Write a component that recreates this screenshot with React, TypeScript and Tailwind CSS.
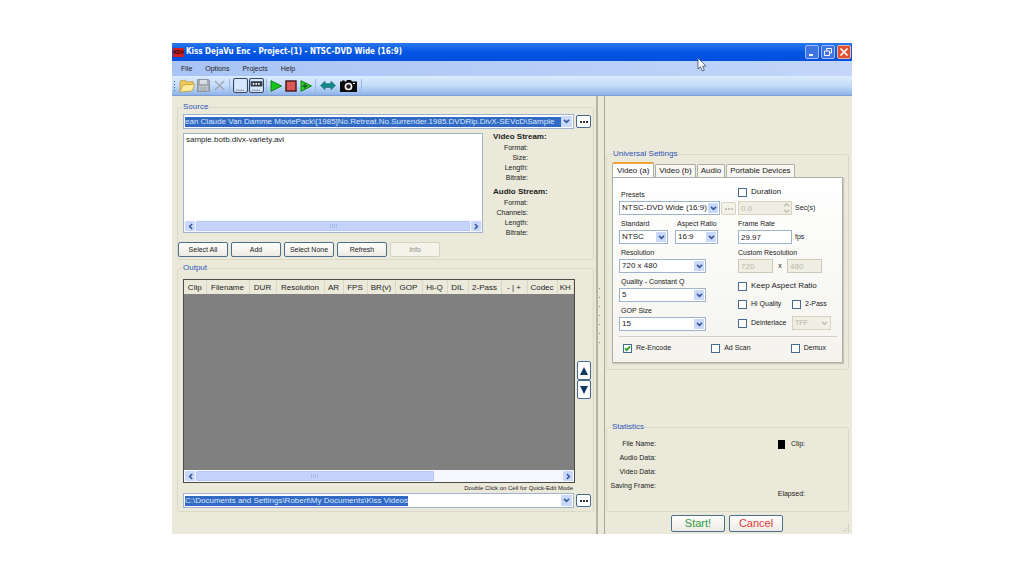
import { useState, type ReactNode } from 'react';
import clsx from 'clsx';

const COLUMNS = [
  { label: 'Clip', width: 'w-[22px]' },
  { label: 'Filename', width: 'w-[43px]' },
  { label: 'DUR', width: 'w-[27px]' },
  { label: 'Resolution', width: 'w-[48px]' },
  { label: 'AR', width: 'w-[19px]' },
  { label: 'FPS', width: 'w-[24px]' },
  { label: 'BR(v)', width: 'w-[28px]' },
  { label: 'GOP', width: 'w-[27px]' },
  { label: 'Hi-Q', width: 'w-[25px]' },
  { label: 'DIL', width: 'w-[21px]' },
  { label: '2-Pass', width: 'w-[33px]' },
  { label: '- | +', width: 'w-[26px]' },
  { label: 'Codec', width: 'w-[30px]' },
  { label: 'KH', width: '' },
];

const STREAMS = [
  { title: 'Video Stream:', fields: ['Format:', 'Size:', 'Length:', 'Bitrate:'] },
  { title: 'Audio Stream:', fields: ['Format:', 'Channels:', 'Length:', 'Bitrate:'] },
];

const TABS = ['Video (a)', 'Video (b)', 'Audio', 'Portable Devices'];

function Chevron({ className = 'text-[#3b5a9a]' }: { className?: string }) {
  return (
    <svg viewBox="0 0 8 6" className={clsx('h-[5px] w-[7px]', className)} fill="none" stroke="currentColor" strokeWidth="2">
      <path d="M1 1l3 3 3-3" />
    </svg>
  );
}

function Group({ title, className, children }: { title: string; className?: string; children: ReactNode }) {
  return (
    <fieldset className={clsx('min-w-0 rounded-[3px] border border-[#dad8c6]', className)}>
      <legend className="h-[10px] px-px text-[8px] leading-[10px] text-[#2f55b8]">{title}</legend>
      {children}
    </fieldset>
  );
}

function PushButton({ label, disabled, className }: { label: string; disabled?: boolean; className?: string }) {
  return (
    <button
      type="button"
      disabled={disabled}
      className={clsx(
        'flex items-center justify-center rounded-[2px] border leading-none',
        disabled
          ? 'border-[#d5d3c2] bg-[#f4f3ea] text-[#8b8a80]'
          : 'border-[#4c6f90] bg-gradient-to-b from-white to-[#eceae2] text-[#222]',
        className
      )}
    >
      {label}
    </button>
  );
}

function Dots({ className }: { className: string }) {
  return (
    <>
      <span className={clsx('h-[2px] w-[2px]', className)} />
      <span className={clsx('h-[2px] w-[2px]', className)} />
      <span className={clsx('h-[2px] w-[2px]', className)} />
    </>
  );
}

function Combo({ label, value, fill }: { label: string; value: string; fill?: boolean }) {
  const [text, setText] = useState(value);
  return (
    <div className="flex h-[15px] items-center gap-[2px]">
      <div className="flex h-full min-w-0 flex-1 items-center border border-[#9fb3cc] bg-white p-px">
        <div className="flex h-full min-w-0 flex-1 items-center">
          <input
            aria-label={label}
            value={text}
            onChange={(e) => setText(e.target.value)}
            className={clsx(
              'h-[10px] bg-[#316ac5] text-[8px] leading-[10px] text-[#dce8fa] outline-none',
              fill ? 'w-full' : 'field-sizing-content'
            )}
          />
        </div>
        <button type="button" aria-label={`${label} list`} className="flex h-full w-[11px] items-center justify-center bg-[#c9d8fb]">
          <Chevron />
        </button>
      </div>
      <button
        type="button"
        aria-label={`Browse ${label}`}
        className="flex h-[13px] w-[15px] items-center justify-center gap-px rounded-[2px] border border-[#45688f] bg-white"
      >
        <Dots className="bg-[#333]" />
      </button>
    </div>
  );
}

function ScrollBar({ thumb }: { thumb: string }) {
  return (
    <div className="flex h-[12px] shrink-0 bg-[#f6f8fe] p-px">
      <button type="button" aria-label="Scroll left" className="flex w-[10px] items-center justify-center rounded-[1px] bg-[#c9d8fb]">
        <Chevron className="rotate-90 text-[#3b5a9a]" />
      </button>
      <div className="flex min-w-0 flex-1 px-px">
        <div className={clsx('flex items-center justify-center gap-px rounded-[1px] border border-[#b4c8f6] bg-[#c5d3fb]', thumb)}>
          {[0, 1, 2, 3].map((n) => (
            <span key={n} className="h-[4px] w-px bg-[#a9bdf0]" />
          ))}
        </div>
      </div>
      <button type="button" aria-label="Scroll right" className="flex w-[10px] items-center justify-center rounded-[1px] bg-[#c9d8fb]">
        <Chevron className="-rotate-90 text-[#3b5a9a]" />
      </button>
    </div>
  );
}

function Dropdown({ label, value, className }: { label: string; value: string; className?: string }) {
  return (
    <label className={clsx('block', className)}>
      <span className="block h-[12px] pl-[2px] leading-[12px] whitespace-nowrap">{label}</span>
      <SelectBox value={value} />
    </label>
  );
}

function SelectBox({ value, label, disabled }: { value: string; label?: string; disabled?: boolean }) {
  return (
    <span className={clsx('relative block h-[14px] border', disabled ? 'border-[#d5d3c2]' : 'border-[#9fb3cc]')}>
      <select
        aria-label={label}
        disabled={disabled}
        className={clsx(
          'block h-full w-full appearance-none pl-[2px] leading-[12px] outline-none',
          disabled ? 'bg-[#efeee2] text-[7px] text-[#b9b7a6] opacity-100' : 'bg-white text-[8px] text-[#222]'
        )}
      >
        <option>{value}</option>
      </select>
      <span
        className={clsx(
          'pointer-events-none absolute top-px right-px bottom-px flex w-[10px] items-center justify-center',
          disabled ? 'bg-[#f2f1e8]' : 'bg-[#c9d8fb]'
        )}
      >
        <Chevron className={disabled ? 'text-[#c5c3b4]' : 'text-[#3b5a9a]'} />
      </span>
    </span>
  );
}

function Check({ label, checked = false, className }: { label: string; checked?: boolean; className?: string }) {
  const [on, setOn] = useState(checked);
  return (
    <label className={clsx('flex h-[12px] items-center gap-[4px] whitespace-nowrap', className)}>
      <span className="relative block h-[9px] w-[9px]">
        <input
          type="checkbox"
          checked={on}
          onChange={(e) => setOn(e.target.checked)}
          className="block h-[9px] w-[9px] appearance-none border border-[#476a8e] bg-white"
        />
        {on && (
          <svg viewBox="0 0 9 9" className="pointer-events-none absolute inset-0" fill="none" stroke="#21a121" strokeWidth="1.7">
            <path d="M2 4.2l1.8 2L7 2.4" />
          </svg>
        )}
      </span>
      {label}
    </label>
  );
}

function TitleBar() {
  return (
    <header className="flex h-[18px] items-center bg-gradient-to-b from-[#2a78ec] via-[#0455e4] to-[#0350dc] pr-px pl-px">
      <span className="flex h-[9px] w-[11px] items-center justify-center bg-[#d3201f] text-[5px] leading-none font-bold text-[#2b0505]">
        KDV
      </span>
      <h1 className="ml-[2px] flex-1 text-[8px] font-bold whitespace-nowrap text-white [font-family:'DejaVu_Sans_Condensed','DejaVu_Sans',sans-serif]">
        Kiss DejaVu Enc - Project-(1) - NTSC-DVD Wide (16:9)
      </h1>
      <div className="flex gap-[2px]">
        <button type="button" aria-label="Minimize" className="h-[14px] w-[14px] rounded-[2px] border border-[#9dbcf5] bg-[#3f74e0]">
          <svg viewBox="0 0 12 12"><path d="M3 8h4v2H3z" fill="#fff" /></svg>
        </button>
        <button type="button" aria-label="Restore" className="h-[14px] w-[14px] rounded-[2px] border border-[#9dbcf5] bg-[#3f74e0]">
          <svg viewBox="0 0 12 12" fill="none" stroke="#fff">
            <path d="M4.5 4.5V2.5h5v4.5H8" />
            <path d="M2.5 5h5v4.5h-5z" />
          </svg>
        </button>
        <button type="button" aria-label="Close" className="h-[14px] w-[14px] rounded-[2px] border border-[#f0b5a5] bg-[#dc5233]">
          <svg viewBox="0 0 12 12" stroke="#fff" strokeWidth="1.7"><path d="M2.5 2.5l7 7M9.5 2.5l-7 7" /></svg>
        </button>
      </div>
    </header>
  );
}

function Tool({ label, className = 'w-[15px]', children }: { label: string; className?: string; children: ReactNode }) {
  return (
    <button type="button" aria-label={label} className={clsx('flex h-[16px] items-center justify-center', className)}>
      {children}
    </button>
  );
}

function ToolBar() {
  return (
    <div className="flex h-[20px] items-center border-b border-[#7f9fd3] bg-gradient-to-b from-[#dcebfe] via-[#c5dcfa] to-[#8fb3ea] pl-[2px]">
      <div className="mr-[3px] flex flex-col gap-[2px]">
        {[0, 1, 2, 3].map((n) => (
          <span key={n} className="h-px w-px bg-[#3a5c9c]" />
        ))}
      </div>
      <Tool label="Open" className="w-[17px]">
        <svg viewBox="0 0 16 14" className="h-[14px] w-[16px]" stroke="#b89433" strokeWidth=".7">
          <path d="M1 13V2l5-1 1 2 7-.5V6L1 13z" fill="#efc95a" />
          <path d="M1 13L4 6l12-1-3 7z" fill="#fdeb9a" />
        </svg>
      </Tool>
      <Tool label="Save" className="w-[16px]">
        <svg viewBox="0 0 13 13" className="h-[13px] w-[13px]">
          <path d="M.5.5h11l1 1v11H.5z" fill="#a3aab2" stroke="#8d959e" />
          <path d="M3 1h7v4H3z" fill="#d7dce1" />
          <path d="M2 7h9v5H2z" fill="#bfc5cb" />
          <path d="M3 9h7M3 11h7" stroke="#98a0a8" strokeWidth=".8" />
        </svg>
      </Tool>
      <Tool label="Delete" className="w-[16px]">
        <svg viewBox="0 0 12 12" className="h-[11px] w-[11px]" stroke="#a0a9b5" strokeWidth="1.5">
          <path d="M1 1l10 10M11 1L1 11" />
        </svg>
      </Tool>
      <span className="mx-[2px] h-[14px] w-px bg-[#9ab6e4]" />
      <Tool label="Panel view" className="w-[16px]">
        <svg viewBox="0 0 14 14" className="h-[15px] w-[15px]" fill="#d6e6fb" stroke="#37465e">
          <rect x=".5" y=".5" width="13" height="13" rx="1.5" />
          <path d="M3 11.5h8" strokeDasharray="1 1" />
        </svg>
      </Tool>
      <Tool label="Compact view" className="w-[17px]">
        <svg viewBox="0 0 14 14" className="h-[15px] w-[15px]" fill="#d6e6fb" stroke="#37465e">
          <rect x=".5" y=".5" width="13" height="13" rx="1.5" />
          <path d="M2 3.5h10v4H2z" fill="#333" />
          <path d="M3.5 5.5h7" stroke="#fff" strokeWidth="1.5" strokeDasharray="1.5 1" />
          <path d="M3 11.5h8" strokeDasharray="1 1" />
        </svg>
      </Tool>
      <span className="mx-px h-[14px] w-px bg-[#9ab6e4]" />
      <Tool label="Play">
        <svg viewBox="0 0 12 12" className="h-[12px] w-[12px]">
          <path d="M1 .7L11.5 6 1 11.3z" fill="#18c51c" stroke="#168018" />
        </svg>
      </Tool>
      <Tool label="Stop">
        <svg viewBox="0 0 12 12" className="h-[12px] w-[12px]">
          <path d="M1 1h10v10H1z" fill="#df5757" stroke="#4a2020" strokeWidth="1.5" />
        </svg>
      </Tool>
      <Tool label="Play and add">
        <svg viewBox="0 0 12 12" className="h-[12px] w-[12px]">
          <path d="M1 .7L11.5 6 1 11.3z" fill="#2fca33" stroke="#168018" />
          <path d="M2.5 6h5M5 3.5v5" stroke="#0d5d10" strokeWidth="1.3" />
        </svg>
      </Tool>
      <span className="mx-[2px] h-[14px] w-px bg-[#9ab6e4]" />
      <Tool label="Resize" className="w-[19px]">
        <svg viewBox="0 0 16 10" className="h-[11px] w-[16px]">
          <path d="M.5 5L5 .7V3h6V.7L15.5 5 11 9.3V7H5v2.3z" fill="#108a8a" stroke="#2c6d78" strokeWidth=".7" />
        </svg>
      </Tool>
      <Tool label="Snapshot" className="w-[22px]">
        <svg viewBox="0 0 17 13" className="h-[13px] w-[17px]">
          <path d="M0 2.5h2v-1h2.5v1H6L7 1h4l1 1.5h5V13H0z" fill="#0b0b0b" />
          <circle cx="8.5" cy="7.5" r="3.1" fill="#222" stroke="#fff" strokeWidth="1.5" />
          <path d="M13 4.5h2" stroke="#fff" />
        </svg>
      </Tool>
      <span className="mx-[2px] h-[14px] w-px bg-[#9ab6e4]" />
    </div>
  );
}

function SourceGroup() {
  return (
    <Group title="Source" className="pb-[2px] [&>legend]:ml-[4px]">
      <div className="px-[5px] pt-[2px] pr-[2px]">
        <Combo label="Source folder" fill value="ean Claude Van Damme MoviePack\[1985]No.Retreat.No.Surrender.1985.DVDRip.DivX-SEVcD\Sample" />
      </div>
      <div className="mt-[4px] flex pl-[5px]">
        <div className="flex h-[100px] min-w-0 flex-1 flex-col border border-[#9fb3cc] bg-white">
          <ul className="flex-1 px-[2px] pt-px text-[8px] leading-[10px]">
            <li>sample.botb.divx-variety.avi</li>
          </ul>
          <ScrollBar thumb="flex-1" />
        </div>
        <div className="w-[110px] shrink-0 pl-[10px]">
          {STREAMS.map((stream) => (
            <section key={stream.title} className="h-[55px]">
              <h2 className="h-[10px] text-[8px] leading-[8px] font-bold whitespace-nowrap">{stream.title}</h2>
              <ul className="w-[35px] text-right leading-[10px]">
                {stream.fields.map((field) => (
                  <li key={field}>{field}</li>
                ))}
              </ul>
            </section>
          ))}
        </div>
      </div>
      <div className="-mt-px flex gap-[3px]">
        <PushButton label="Select All" className="h-[15px] w-[50px]" />
        <PushButton label="Add" className="h-[15px] w-[50px]" />
        <PushButton label="Select None" className="h-[15px] w-[50px]" />
        <PushButton label="Refresh" className="h-[15px] w-[50px]" />
        <PushButton label="Info" disabled className="h-[15px] w-[50px]" />
      </div>
    </Group>
  );
}

function OutputGroup() {
  return (
    <Group title="Output" className="mt-[3px] flex flex-1 flex-col pb-[3px] [&>legend]:ml-[4px]">
      <div className="flex flex-1 gap-[2px] pt-[6px] pr-[2px] pl-[5px]">
        <div className="flex min-w-0 flex-1 flex-col border border-[#4b4b48] bg-[#808080]">
          <div className="flex-1 overflow-hidden">
            <table className="w-full table-fixed border-collapse text-[8px]">
              <thead>
                <tr className="h-[14px] bg-[#ebe9da]">
                  {COLUMNS.map((col) => (
                    <th
                      key={col.label}
                      scope="col"
                      className={clsx('overflow-hidden border-r border-[#d9d7c8] p-0 text-center leading-[13px] font-normal whitespace-nowrap', col.width)}
                    >
                      {col.label}
                    </th>
                  ))}
                </tr>
              </thead>
            </table>
          </div>
          <ScrollBar thumb="w-[65%]" />
        </div>
        <div className="flex w-[14px] flex-col pt-[82px]">
          <button type="button" aria-label="Move up" className="flex h-[19px] items-center justify-center rounded-[2px] border border-[#45688f] bg-white">
            <svg viewBox="0 0 8 8" className="h-[8px] w-[8px]"><path d="M4 0l4 8H0z" fill="#123a63" /></svg>
          </button>
          <button type="button" aria-label="Move down" className="flex h-[19px] items-center justify-center rounded-[2px] border border-[#45688f] bg-white">
            <svg viewBox="0 0 8 8" className="h-[8px] w-[8px]"><path d="M4 8L0 0h8z" fill="#123a63" /></svg>
          </button>
        </div>
      </div>
      <p className="h-[10px] pr-[20px] text-right text-[6px] leading-[10px]">Double Click on Cell for Quick-Edit Mode</p>
      <div className="pr-[2px] pl-[5px]">
        <Combo label="Output folder" value="C:\Documents and Settings\Robert\My Documents\Kiss Videos" />
      </div>
    </Group>
  );
}

function VideoSettings() {
  return (
    <div className="border border-[#a9b0a8] bg-gradient-to-b from-white to-[#f4f3ee] pr-[5px] pb-[8px] pl-[6px] shadow-[1px_1px_1px_#c9c7b6]">
      <div className="flex">
        <div className="flex w-[119px] shrink-0 flex-col gap-[3px] pt-[11px]">
          <div className="flex items-end gap-px">
            <Dropdown label="Presets" value="NTSC-DVD Wide (16:9)" className="w-[101px]" />
            <button type="button" disabled aria-label="Edit preset" className="flex h-[13px] w-[15px] items-center justify-center gap-px rounded-[2px] border border-[#d5d3c2] bg-[#f4f3ea]">
              <Dots className="bg-[#c5c3b4]" />
            </button>
          </div>
          <div className="flex gap-[7px]">
            <Dropdown label="Standard" value="NTSC" className="w-[49px]" />
            <Dropdown label="Aspect Ratio" value="16:9" className="w-[43px]" />
          </div>
          <Dropdown label="Resolution" value="720 x 480" className="w-[87px]" />
          <Dropdown label="Quality - Constant Q" value="5" className="w-[87px]" />
          <Dropdown label="GOP Size" value="15" className="w-[87px]" />
        </div>
        <div className="flex min-w-0 flex-1 flex-col pt-[8px]">
          <Check label="Duration" className="text-[8px]" />
          <label className="mt-[3px] flex h-[14px] items-center gap-[3px]">
            <span className="flex h-full w-[54px] items-center border border-[#d5d3c2] bg-[#efeee2]">
              <input disabled defaultValue="0.0" className="h-full w-[44px] pl-[2px] text-[8px] text-[#b9b7a6]" />
              <span className="flex flex-col gap-[2px]">
                <Chevron className="h-[4px] rotate-180 text-[#c5c3b4]" />
                <Chevron className="h-[4px] text-[#c5c3b4]" />
              </span>
            </span>
            Sec(s)
          </label>
          <label htmlFor="frame-rate" className="mt-[3px] h-[12px] leading-[12px]">Frame Rate</label>
          <div className="flex h-[14px] items-center gap-[3px]">
            <input id="frame-rate" defaultValue="29.97" className="h-full w-[54px] border border-[#9fb3cc] bg-white pl-[2px] text-[8px]" />
            fps
          </div>
          <span className="mt-[3px] h-[12px] leading-[12px]">Custom Resolution</span>
          <div className="flex h-[14px] items-center">
            <input aria-label="Custom width" disabled defaultValue="720" className="h-full w-[35px] border border-[#cbc9b8] bg-[#efeee2] pl-[2px] text-[8px] text-[#b9b7a6]" />
            <span className="w-[14px] text-center">x</span>
            <input aria-label="Custom height" disabled defaultValue="480" className="h-full w-[35px] border border-[#cbc9b8] bg-[#efeee2] pl-[2px] text-[8px] text-[#b9b7a6]" />
          </div>
          <Check label="Keep Aspect Ratio" className="mt-[7px] text-[8px]" />
          <div className="mt-[6px] flex">
            <Check label="Hi Quality" className="w-[54px]" />
            <Check label="2-Pass" />
          </div>
          <div className="mt-[6px] flex items-center">
            <Check label="Deinterlace" className="w-[54px]" />
            <div className="w-[39px]">
              <SelectBox label="Field order" value="TFF" disabled />
            </div>
          </div>
        </div>
      </div>
      <div className="mt-[5px] flex justify-between border-t border-[#cfcdc0] pt-[5px] pr-[11px] pl-[4px]">
        <Check label="Re-Encode" checked />
        <Check label="Ad Scan" />
        <Check label="Demux" />
      </div>
    </div>
  );
}

function SettingsGroup() {
  const [tab, setTab] = useState(TABS[0]);
  return (
    <Group title="Universal Settings" className="px-[5px] pb-[6px]">
      <div role="tablist" className="flex h-[18px] items-end gap-px pt-[3px]">
        {TABS.map((name) => (
          <button
            key={name}
            type="button"
            role="tab"
            aria-selected={tab === name}
            onClick={() => setTab(name)}
            className={clsx(
              'rounded-t-[2px] border border-b-0 text-[8px] leading-none whitespace-nowrap',
              tab === name
                ? 'h-[15px] border-t-2 border-[#a9b0a8] border-t-[#eda336] bg-white px-[4px]'
                : 'h-[13px] border-[#a9b0a8] bg-[#f7f6f0] px-[3px]'
            )}
          >
            {name}
          </button>
        ))}
      </div>
      <VideoSettings />
    </Group>
  );
}

function Statistics() {
  return (
    <Group title="Statistics" className="mt-auto h-[90px] [&>legend]:ml-[4px]">
      <div className="flex justify-between pt-[5px] pr-[43px]">
        <ul className="w-[49px] text-right leading-[14px] whitespace-nowrap">
          <li>File Name:</li>
          <li>Audio Data:</li>
          <li>Video Data:</li>
          <li>Saving Frame:</li>
        </ul>
        <div className="flex flex-col items-end gap-[36px] leading-[14px]">
          <span className="flex items-center gap-[6px]">
            <span className="h-[9px] w-[7px] bg-black" />
            Clip:
          </span>
          <span>Elapsed:</span>
        </div>
      </div>
    </Group>
  );
}

export default function App() {
  return (
    <div className="flex min-h-screen flex-col bg-white px-[172px] pt-[43px] pb-[42px] text-[7px] text-[#222] [font-family:'Liberation_Sans',Arial,sans-serif]">
      <div className="relative flex flex-1 flex-col bg-[#ebe9da]">
        <TitleBar />
        <nav className="flex h-[15px] items-center gap-[13px] bg-gradient-to-r from-[#a9c4f5] to-[#c3d6f9] pl-[9px]">
          {['File', 'Options', 'Projects', 'Help'].map((item) => (
            <button key={item} type="button" className="leading-none">
              {item}
            </button>
          ))}
        </nav>
        <ToolBar />

        <main className="flex flex-1">
          <div className="flex min-w-0 flex-1 flex-col pt-[6px] pr-[2px] pb-[22px] pl-[5px]">
            <SourceGroup />
            <OutputGroup />
          </div>

          {/* Splitter */}
          <div className="flex w-[9px] shrink-0 flex-col items-start justify-center gap-[8px] border-r border-l-2 border-r-[#aaa899] border-l-[#b5b3a4] pl-px">
            {[0, 1, 2, 3, 4, 5, 6].map((n) => (
              <span key={n} className="h-px w-px bg-[#8d8b7c]" />
            ))}
          </div>

          <div className="flex w-[247px] shrink-0 flex-col pt-[53px] pr-[3px] pb-[2px] pl-px">
            <SettingsGroup />
            <Statistics />
            <div className="mt-[3px] flex gap-[4px] pl-[65px] text-[11px]">
              <PushButton label="Start!" className="h-[17px] w-[54px] !text-[#2c9a3c]" />
              <PushButton label="Cancel" className="h-[17px] w-[54px] !text-[#e23a3a]" />
              <svg viewBox="0 0 8 8" className="mt-auto ml-auto h-[8px] w-[8px]" stroke="#b5b3a2" strokeDasharray="1 1.5">
                <path d="M7.5 1v7M5 4v4M2.5 6.5V8" />
              </svg>
            </div>
          </div>
        </main>

        {/* Mouse pointer */}
        <svg viewBox="0 0 10 15" className="pointer-events-none absolute top-[14px] right-[145px] h-[15px] w-[10px]">
          <path d="M1 1v11l2.5-2.2L5.3 14l2-.9-1.7-3.900H9z" fill="#fff" stroke="#3b4a66" strokeWidth=".8" />
        </svg>
      </div>
    </div>
  );
}
